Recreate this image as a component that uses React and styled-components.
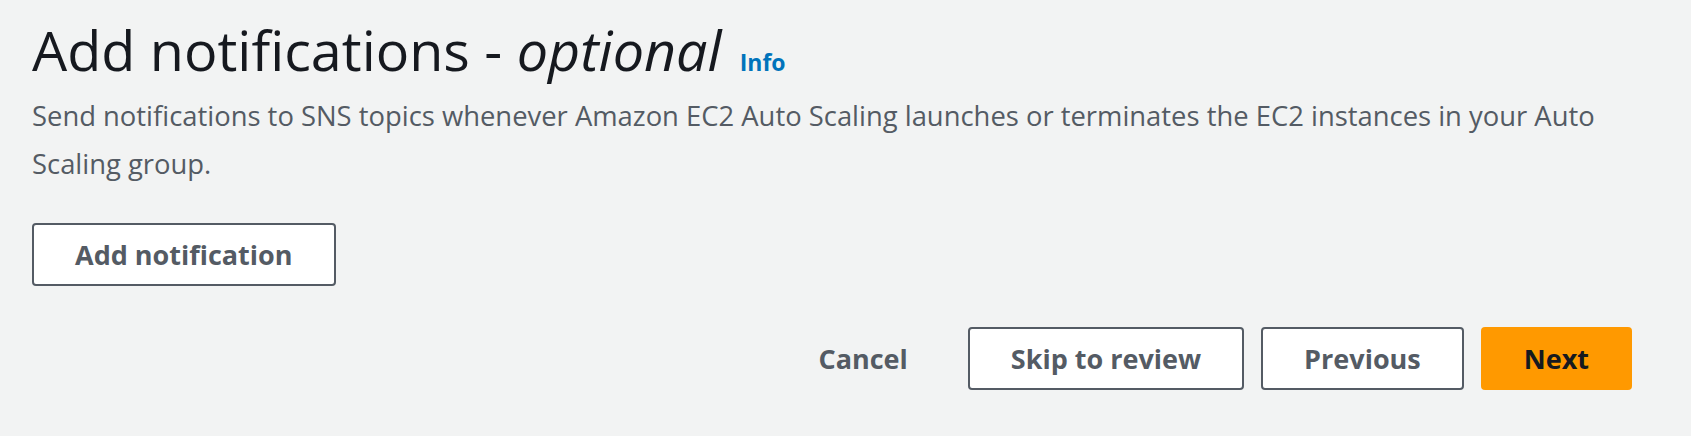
import React from 'react';
import styled, { createGlobalStyle } from 'styled-components';

const GlobalStyle = createGlobalStyle`
    body {
        margin: 0;
        background-color: #f2f3f3;
        font-family: "Open Sans", "Noto Sans", sans-serif;
    }
`;

const Page = styled.div`
    padding: 17px 59px 40px 32px;
`;

const TitleRow = styled.div`
    display: flex;
    align-items: baseline;
    gap: 18px;
`;

const Title = styled.h1`
    margin: 0;
    font-size: 55.7px;
    line-height: 64px;
    font-weight: 400;
    color: #16191f;
    em {
        font-style: italic;
    }
`;

const InfoLink = styled.a`
    font-size: 23px;
    font-weight: 700;
    color: #0073bb;
    text-decoration: none;
    cursor: pointer;
`;

const Description = styled.p`
    margin: 11px 0 0;
    font-size: 27.4px;
    line-height: 48px;
    color: #545b64;
`;

const Button = styled.button`
    font-family: inherit;
    font-size: 27px;
    line-height: 39px;
    font-weight: 700;
    padding: 10px 41px;
    border-radius: 4px;
    border: 2px solid ${props => props.variant === 'link' || props.variant === 'primary' ? 'transparent' : '#545b64'};
    background-color: ${props => props.variant === 'primary' ? '#ff9900' : props.variant === 'link' ? 'transparent' : '#ffffff'};
    color: ${props => props.variant === 'primary' ? '#16191f' : '#545b64'};
    cursor: pointer;
`;

const AddRow = styled.div`
    margin-top: 35px;
`;

const Actions = styled.div`
    display: flex;
    justify-content: flex-end;
    gap: 17px;
    margin-top: 41px;
`;

const App = () => {
    return (
        <Page>
            <GlobalStyle />
            <TitleRow>
                <Title>Add notifications - <em>optional</em></Title>
                <InfoLink>Info</InfoLink>
            </TitleRow>
            <Description>
                Send notifications to SNS topics whenever Amazon EC2 Auto Scaling launches or terminates the EC2 instances in your Auto Scaling group.
            </Description>
            <AddRow>
                <Button>Add notification</Button>
            </AddRow>
            <Actions>
                <Button variant="link">Cancel</Button>
                <Button>Skip to review</Button>
                <Button>Previous</Button>
                <Button variant="primary">Next</Button>
            </Actions>
        </Page>
    );
}

export default App;
